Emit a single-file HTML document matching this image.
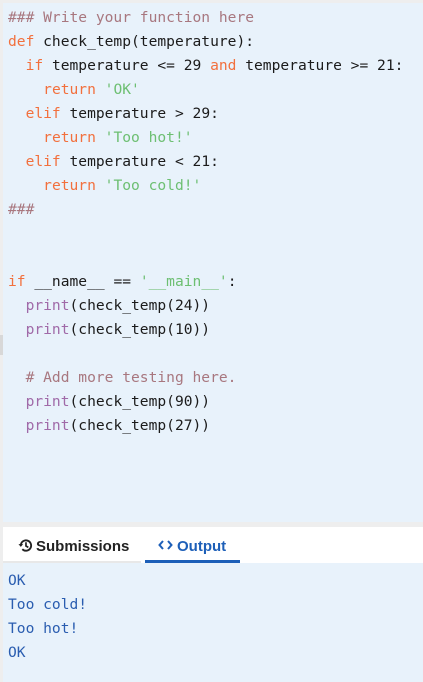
<!DOCTYPE html>
<html><head><style>
body{margin:0;width:423px;height:682px;background:#eeeeee;position:relative;overflow:hidden}
.code{position:absolute;left:3px;top:3px;right:0;height:519px;background:#e8f2fb}
pre{margin:0;font-family:"DejaVu Sans Mono",monospace;font-size:14.6px;line-height:24px;position:absolute;left:5px;top:3px;color:#1b1b1b}
.c{color:#a8777f}.k{color:#f2703d}.s{color:#6dbf72}.p{color:#a06aa8}
.tabs{position:absolute;left:3px;right:0;top:527px;height:36px;background:#fff;font-family:"Liberation Sans",sans-serif;font-weight:bold;font-size:15px}
.t1{position:absolute;left:15px;top:11px;color:#222}
.t2{position:absolute;left:155px;top:11px;color:#1d5fb8}
.ul{position:absolute;left:142px;width:95px;top:33px;height:3px;background:#1d5fb8}
.gl{position:absolute;left:0;width:138px;top:34px;height:2px;background:#e8e8e8}
.out{position:absolute;left:3px;right:0;top:563px;bottom:0;background:#e8f2fb}
.out pre{color:#2a5db0;top:6px;left:5px}
.mark{position:absolute;left:0;top:335px;width:3px;height:20px;background:#d8d8d8}
</style></head><body>
<div class="code"><pre><span class="c">### Write your function here</span>
<span class="k">def</span> check_temp(temperature):
  <span class="k">if</span> temperature &lt;= 29 <span class="k">and</span> temperature &gt;= 21:
    <span class="k">return</span> <span class="s">'OK'</span>
  <span class="k">elif</span> temperature &gt; 29:
    <span class="k">return</span> <span class="s">'Too hot!'</span>
  <span class="k">elif</span> temperature &lt; 21:
    <span class="k">return</span> <span class="s">'Too cold!'</span>
<span class="c">###</span>


<span class="k">if</span> __name__ == <span class="s">'__main__'</span>:
  <span class="p">print</span>(check_temp(24))
  <span class="p">print</span>(check_temp(10))

  <span class="c"># Add more testing here.</span>
  <span class="p">print</span>(check_temp(90))
  <span class="p">print</span>(check_temp(27))</pre></div>
<div class="mark"></div>
<div class="tabs">
<div class="gl"></div>
<div class="t1"><svg width="15" height="15" viewBox="0 0 16 16" style="vertical-align:-2px;margin-right:3px"><path d="M3 8a5.5 5.5 0 1 1 1.6 3.9" fill="none" stroke="#222" stroke-width="2"/><path d="M0.5 6.5L3 9.5L5.5 6.5Z" fill="#222"/><path d="M8.5 4.5V8.5L11 10" fill="none" stroke="#222" stroke-width="1.8"/></svg>Submissions</div>
<div class="t2"><svg width="15" height="12" viewBox="0 0 15 12" style="vertical-align:0;margin-right:4px"><path d="M5 2L1.5 6L5 10M10 2L13.5 6L10 10" fill="none" stroke="#1d5fb8" stroke-width="2"/></svg>Output</div>
<div class="ul"></div>
</div>
<div class="out"><pre>OK
Too cold!
Too hot!
OK</pre></div>
</body></html>
